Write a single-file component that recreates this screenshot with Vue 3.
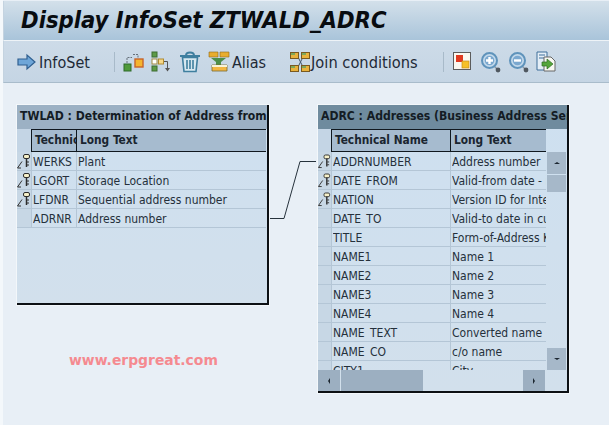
<script setup>
const leftRows = [
  { key: true, name: 'WERKS', text: 'Plant' },
  { key: true, name: 'LGORT', text: 'Storage Location' },
  { key: true, name: 'LFDNR', text: 'Sequential address number' },
  { key: false, name: 'ADRNR', text: 'Address number' }
]
const rightRows = [
  { key: true, name: 'ADDRNUMBER', text: 'Address number' },
  { key: true, name: 'DATE_FROM', text: 'Valid-from date - in' },
  { key: true, name: 'NATION', text: 'Version ID for Interna' },
  { key: false, name: 'DATE_TO', text: 'Valid-to date in curr' },
  { key: false, name: 'TITLE', text: 'Form-of-Address Key' },
  { key: false, name: 'NAME1', text: 'Name 1' },
  { key: false, name: 'NAME2', text: 'Name 2' },
  { key: false, name: 'NAME3', text: 'Name 3' },
  { key: false, name: 'NAME4', text: 'Name 4' },
  { key: false, name: 'NAME_TEXT', text: 'Converted name' },
  { key: false, name: 'NAME_CO', text: 'c/o name' },
  { key: false, name: 'CITY1', text: 'City' }
]
</script>

<template>
  <div class="page">
    <header class="title"><h1>Display InfoSet ZTWALD_ADRC</h1></header>
    <div class="toolbar">
      <svg class="ic arrow" width="20" height="18" viewBox="0 0 20 18">
        <path d="M1 6h9V2l8 7-8 7v-4H1z" fill="#6ea6d8" stroke="#2f5f90" stroke-width="1.2" />
      </svg>
      <span class="tool-label first">InfoSet</span>
      <i class="sep sep-a"></i>
      <svg class="ic i1" width="22" height="22" viewBox="0 0 22 22">
        <rect x="1" y="13" width="7" height="7" fill="#4f9a3a" stroke="#2e6a2a" />
        <rect x="12" y="8" width="8" height="8" fill="#f5b52e" stroke="#c8642a" stroke-width="1.4" />
        <path d="M4 12V6.500h5M10 3.500h5v3" fill="none" stroke="#66707a" stroke-dasharray="2 1" />
      </svg>
      <svg class="ic i2" width="22" height="22" viewBox="0 0 22 22">
        <rect x="1" y="1" width="5" height="5" fill="#5d9a46" stroke="#3d6d30" />
        <rect x="1" y="8" width="5" height="5" fill="#fff" stroke="#a08a40" />
        <rect x="7.500" y="8" width="5" height="5" fill="#f7d888" stroke="#b08a30" />
        <rect x="1" y="15" width="5" height="5" fill="#5d9a46" stroke="#3d6d30" />
        <path d="M13 10.500h3.500v7" fill="none" stroke="#555" />
        <path d="M14 17h5l-2.500 3.500z" fill="#555" />
      </svg>
      <svg class="ic i3" width="22" height="22" viewBox="0 0 22 22">
        <path d="M1 5h20M7 4.500c0-4 8-4 8 0" fill="none" stroke="#3f7f9f" stroke-width="2" />
        <path d="M3.500 6.500h15l-1.500 14H5z" fill="#d7e8f0" stroke="#3f7f9f" stroke-width="1.600" />
        <path d="M8 9v9M11 9v9M14 9v9" stroke="#3f7f9f" stroke-width="1.600" />
      </svg>
      <svg class="ic i4" width="22" height="22" viewBox="0 0 22 22">
        <path d="M1 1h9v5H1z" fill="#e8ad2f" stroke="#8f6a1a" stroke-width=".6" />
        <path d="M12 1h9v5h-9z" fill="#e8ad2f" stroke="#8f6a1a" stroke-width=".6" />
        <path d="M3 7h15l-5 4v3H8v-3z" fill="#4d8f4a" />
        <path d="M4 14h15v6H4z" fill="#f2b744" stroke="#7a6a30" stroke-width=".8" />
        <path d="M4 14h15v2H4z" fill="#f7f3d8" />
      </svg>
      <span class="tool-label alias">Alias</span>
      <svg class="ic i5" width="22" height="22" viewBox="0 0 22 22">
        <path d="M9 6l5 10M14 6L9 16" stroke="#46586a" />
        <rect x="1.500" y="1.500" width="8" height="6" fill="#e8b23c" stroke="#7a5a20" />
        <rect x="12.500" y="1.500" width="8" height="6" fill="#e8b23c" stroke="#7a5a20" />
        <rect x="1.500" y="14.500" width="8" height="6" fill="#e8b23c" stroke="#7a5a20" />
        <rect x="12.500" y="14.500" width="8" height="6" fill="#e8b23c" stroke="#7a5a20" />
        <path d="M2 2h4v2H2zM13 2h4v2h-4zM2 15h4v2H2zM13 15h4v2h-4z" fill="#7fa858" />
      </svg>
      <span class="tool-label join">Join conditions</span>
      <i class="sep sep-b"></i>
      <svg class="ic i6" width="19" height="19" viewBox="0 0 19 19">
        <rect x=".5" y=".5" width="17" height="17" fill="#fbf8f0" stroke="#5c5c5c" />
        <rect x="3" y="3" width="7" height="7" fill="#e03a20" />
        <rect x="9" y="9" width="7" height="7" fill="#f6c028" stroke="#c98f1a" stroke-width=".7" />
      </svg>
      <svg class="ic i7" width="20" height="22" viewBox="0 0 20 22">
        <path d="M13 15l4 4" stroke="#8a97a3" stroke-width="1.500" />
        <circle cx="17" cy="19" r="2.400" fill="#505860" />
        <circle cx="8.500" cy="9.500" r="7.500" fill="#c3d9eb" stroke="#5f93bb" stroke-width="2" />
        <circle cx="8.500" cy="9.500" r="4.800" fill="#7ba8cf" />
        <path d="M8.500 6v7M5 9.500h7" stroke="#fff" stroke-width="2.400" />
      </svg>
      <svg class="ic i8" width="20" height="22" viewBox="0 0 20 22">
        <path d="M13 15l4 4" stroke="#8a97a3" stroke-width="1.500" />
        <circle cx="17" cy="19" r="2.400" fill="#505860" />
        <circle cx="8.500" cy="9.500" r="7.500" fill="#c3d9eb" stroke="#5f93bb" stroke-width="2" />
        <circle cx="8.500" cy="9.500" r="4.800" fill="#7ba8cf" />
        <path d="M5 9.500h7" stroke="#fff" stroke-width="2.400" />
      </svg>
      <svg class="ic i9" width="21" height="21" viewBox="0 0 21 21">
        <path d="M1 1h10v18H1z" fill="#e4eef7" stroke="#3f6f9a" />
        <path d="M3 4h6M3 7h6" stroke="#3f6f9a" />
        <path d="M8 6h7l4 4v10H8z" fill="#f7f7f2" stroke="#666" />
        <path d="M6 11h5V8l6 5-6 5v-3H6z" fill="#55a53c" stroke="#2f6f22" stroke-width=".7" />
      </svg>
    </div>

    <main class="canvas">
      <svg class="link" width="60" height="70" viewBox="0 0 60 70">
        <path d="M0 69.500h15L31 12.500h16" fill="none" stroke="#26323c" />
      </svg>

      <section class="node node-left">
        <div class="node-title">TWLAD : Determination of Address from</div>
        <div class="grid">
          <div class="cols cols-left">
            <div class="gutter-head"></div>
            <div class="col-head">Technical Name</div>
            <div class="col-head">Long Text</div>
          </div>
          <div v-for="row in leftRows" :key="row.name" class="cols cols-left row">
            <div class="gutter">
              <svg v-if="row.key" width="14" height="15" viewBox="0 0 14 15">
                <path d="M.5 14L5 7.500M.5 14H4" fill="none" stroke="#333" />
                <rect x="6.500" y=".5" width="6" height="4" rx="1.500" fill="#f6f0c8" stroke="#2c2c2c" />
                <path d="M9.500 4.500V13" stroke="#2c2c2c" stroke-width="1.500" />
                <path d="M10 8h2M10 11h2" stroke="#2c2c2c" />
              </svg>
            </div>
            <div class="cell"><span class="clip">{{ row.name }}</span></div>
            <div class="cell"><span class="clip">{{ row.text }}</span></div>
          </div>
        </div>
      </section>

      <section class="node node-right">
        <div class="node-title dark">ADRC : Addresses (Business Address Services)</div>
        <div class="grid">
          <div class="cols cols-right">
            <div class="gutter-head"></div>
            <div class="col-head">Technical Name</div>
            <div class="col-head">Long Text</div>
          </div>
          <div class="body-wrap">
            <div class="rows">
              <div v-for="row in rightRows" :key="row.name" class="cols cols-right row">
                <div class="gutter">
                  <svg v-if="row.key" width="14" height="15" viewBox="0 0 14 15">
                    <path d="M.5 14L5 7.500M.5 14H4" fill="none" stroke="#333" />
                    <rect x="6.500" y=".5" width="6" height="4" rx="1.500" fill="#f6f0c8" stroke="#2c2c2c" />
                    <path d="M9.500 4.500V13" stroke="#2c2c2c" stroke-width="1.500" />
                    <path d="M10 8h2M10 11h2" stroke="#2c2c2c" />
                  </svg>
                </div>
                <div class="cell"><span class="clip">{{ row.name }}</span></div>
                <div class="cell"><span class="clip">{{ row.text }}</span></div>
              </div>
            </div>
            <div class="vbar">
              <div class="sbtn up"><b class="tri-up"></b></div>
              <div class="vthumb"></div>
              <div class="vspace"></div>
              <div class="sbtn down"><b class="tri-down"></b></div>
            </div>
          </div>
          <div class="hbar">
            <div class="hbtn"><b class="tri-left"></b></div>
            <div class="hthumb"></div>
            <div class="hspace"></div>
            <div class="hbtn right"><b class="tri-right"></b></div>
          </div>
        </div>
      </section>

      <div class="mark">www.erpgreat.com</div>
    </main>
  </div>
</template>

<style>
html, body { margin: 0; background: #e8eff6; }
</style>

<style scoped>
.page {
  width: 609px;
  height: 425px;
  overflow: hidden;
  display: flex;
  flex-direction: column;
  box-sizing: border-box;
  border-left: 3px solid #f4f8fb;
  background: #e8eff6;
  font-family: "DejaVu Sans", sans-serif;
  font-stretch: condensed;
  color: #1c2733;
}
.title {
  height: 39px;
  margin-top: 1px;
  box-sizing: border-box;
  border-left: 1px solid #c4d3e0;
  background: linear-gradient(#d3e0ea, #a9c4da);
  display: flex;
  align-items: center;
  padding-left: 17px;
  flex: none;
}
h1 {
  margin: -2px 0 0;
  font-family: "DejaVu Sans", sans-serif;
  font-stretch: condensed;
  font-style: italic;
  font-weight: 700;
  font-size: 23.600px;
  color: #080c10;
  white-space: nowrap;
}
.toolbar {
  height: 43px;
  flex: none;
  box-sizing: border-box;
  border-top: 1px solid #eef3f7;
  border-bottom: 1px solid #a9bccb;
  border-left: 1px solid #c4d3e0;
  background: linear-gradient(#cddbe8, #c5d5e4);
  display: flex;
  align-items: center;
  padding-left: 13px;
}
.ic { flex: none; display: block; }
.tool-label { font-size: 16px; margin-top: 2px; color: #1e2a36; white-space: nowrap; }
.first { margin-left: 2px; }
.sep { width: 1px; height: 20px; background: #a8bac9; flex: none; }
.sep-a { margin-left: 24px; }
.i1 { margin-left: 8px; }
.i2 { margin-left: 6px; }
.i3 { margin-left: 6px; }
.i4 { margin-left: 7px; }
.alias { margin-left: 2px; }
.i5 { margin-left: 23px; }
.join { margin-left: 0; font-size: 16.300px; }
.sep-b { margin-left: 25px; }
.i6 { margin-left: 9px; }
.i7 { margin-left: 9px; }
.i8 { margin-left: 8px; }
.i9 { margin-left: 7px; }

.canvas { position: relative; flex: 1; }
.link { position: absolute; left: 266px; top: 66px; }
.node {
  position: absolute;
  box-sizing: border-box;
  background: linear-gradient(#cee0f0, #d2e0ec);
  border-right: 2px solid #0c1014;
  border-bottom: 2px solid #0c1014;
  box-shadow: 0 0 0 1px #f3f7fa;
  overflow: hidden;
  display: flex;
  flex-direction: column;
}
.node-left { left: 14px; top: 22px; width: 252px; height: 200px; }
.node-right { left: 315px; top: 22px; width: 251px; height: 288px; }
.node-title {
  height: 24px;
  flex: none;
  background: #9cb1c4;
  font-size: 12.100px;
  font-weight: 700;
  line-height: 23px;
  padding-left: 3px;
  white-space: nowrap;
  overflow: hidden;
  color: #141c24;
}
.node-title.dark { background: #6f8b9e; }
.grid { flex: 1; min-height: 0; display: flex; flex-direction: column; }
.cols { display: grid; height: 23px; flex: none; }
.cols-left { grid-template-columns: 14px 45px 190px; }
.cols-right { grid-template-columns: 13px 119px 96px; }
.gutter-head { background: #c4d5e5; }
.col-head {
  background: #a6bbcf;
  border: 1px solid #10181f;
  border-right-width: 0;
  box-sizing: border-box;
  font-size: 11.800px;
  font-weight: 700;
  line-height: 21px;
  padding-left: 3px;
  overflow: hidden;
  white-space: nowrap;
  color: #1a2530;
}
.row { height: 19px; }
.gutter {
  background: #c7d7e5;
  box-sizing: border-box;
  border-bottom: 1px solid #b4c6d6;
  display: flex;
  align-items: center;
}
.cell {
  box-sizing: border-box;
  border-left: 1px solid #b4c6d6;
  border-bottom: 1px solid #b4c6d6;
  font-size: 12px;
  padding-left: 1px;
  padding-top: 3px;
  overflow: hidden;
  color: #25303b;
}
.clip {
  display: block;
  height: 12px;
  line-height: 14px;
  overflow: hidden;
  white-space: nowrap;
}
.body-wrap { flex: 1; min-height: 0; display: flex; }
.rows { width: 228px; overflow: hidden; flex: none; }
.vbar { margin-left: 1px; width: 19px; flex: none; display: flex; flex-direction: column; }
.sbtn {
  height: 22px;
  flex: none;
  background: #a6b8c9;
  display: flex;
  align-items: center;
  justify-content: center;
}
.vthumb { height: 17px; margin-top: 1px; background: #a6b8c9; flex: none; }
.vspace { flex: 1; }
.hbar { height: 21px; flex: none; display: flex; }
.hbtn {
  width: 22px;
  flex: none;
  background: #9cafc1;
  display: flex;
  align-items: center;
  justify-content: center;
}
.hthumb { width: 82px; margin-left: 1px; background: #9cafc1; flex: none; }
.hspace { width: 100px; flex: none; }
b { display: block; width: 0; height: 0; }
.tri-up { border: 3px solid transparent; border-top: 0; border-bottom: 2px solid #1c2630; }
.tri-down { border: 3px solid transparent; border-bottom: 0; border-top: 2px solid #1c2630; }
.tri-left { border: 3px solid transparent; border-left: 0; border-right: 2px solid #1c2630; }
.tri-right { border: 3px solid transparent; border-right: 0; border-left: 2px solid #1c2630; }

.mark {
  position: absolute;
  left: 66px;
  top: 267px;
  font-family: "DejaVu Sans", sans-serif;
  font-stretch: normal;
  font-weight: 700;
  font-size: 13.900px;
  line-height: 20px;
  color: #f58a90;
  white-space: nowrap;
}
</style>
